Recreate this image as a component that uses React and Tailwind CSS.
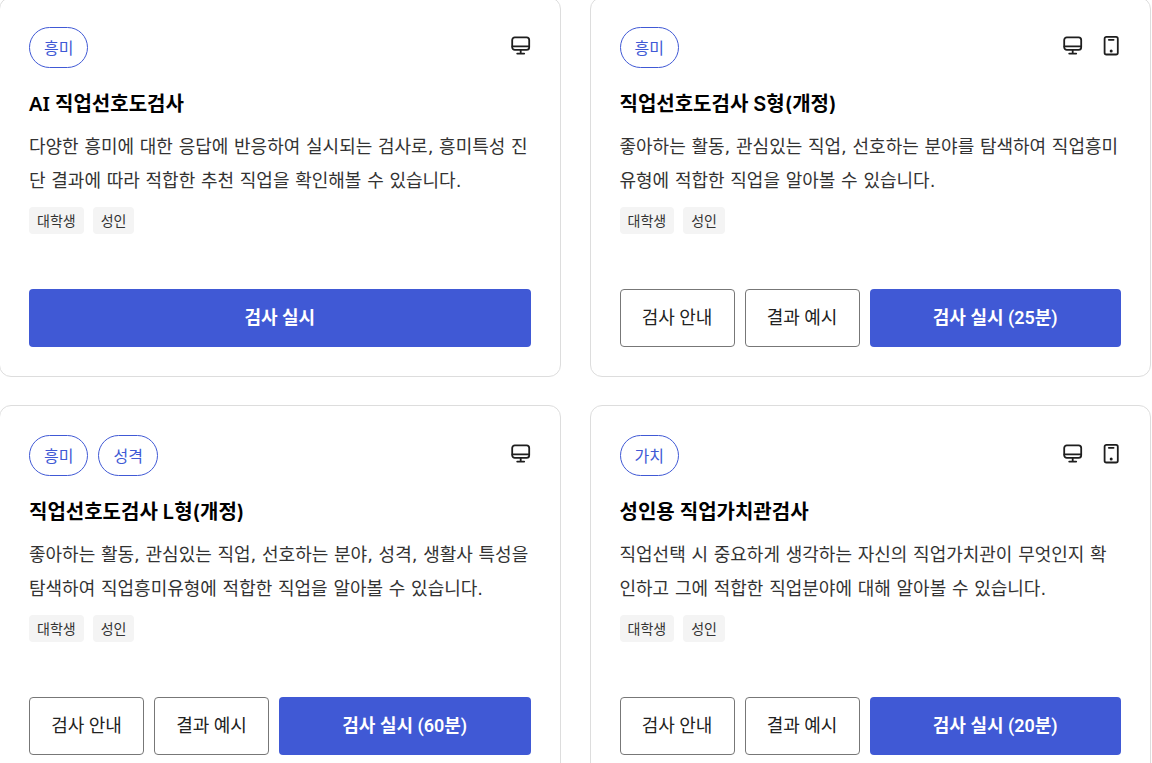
import React from "react";
import clsx from "clsx";

const tests = [
  {
    id: "ai",
    categories: ["흥미"],
    mobile: false,
    title: "AI 직업선호도검사",
    titleFont: "font-['Noto_Sans','Noto_Sans_CJK_KR',sans-serif]",
    description:
      "다양한 흥미에 대한 응답에 반응하여 실시되는 검사로, 흥미특성 진단 결과에 따라 적합한 추천 직업을 확인해볼 수 있습니다.",
    targets: ["대학생", "성인"],
    guide: false,
    action: "검사 실시",
  },
  {
    id: "preference-s",
    categories: ["흥미"],
    mobile: true,
    title: "직업선호도검사 S형(개정)",
    description:
      "좋아하는 활동, 관심있는 직업, 선호하는 분야를 탐색하여 직업흥미유형에 적합한 직업을 알아볼 수 있습니다.",
    targets: ["대학생", "성인"],
    guide: true,
    action: "검사 실시 (25분)",
  },
  {
    id: "preference-l",
    categories: ["흥미", "성격"],
    mobile: false,
    title: "직업선호도검사 L형(개정)",
    description:
      "좋아하는 활동, 관심있는 직업, 선호하는 분야, 성격, 생활사 특성을 탐색하여 직업흥미유형에 적합한 직업을 알아볼 수 있습니다.",
    targets: ["대학생", "성인"],
    guide: true,
    action: "검사 실시 (60분)",
  },
  {
    id: "values",
    categories: ["가치"],
    mobile: true,
    title: "성인용 직업가치관검사",
    description:
      "직업선택 시 중요하게 생각하는 자신의 직업가치관이 무엇인지 확인하고 그에 적합한 직업분야에 대해 알아볼 수 있습니다.",
    targets: ["대학생", "성인"],
    guide: true,
    action: "검사 실시 (20분)",
  },
];

const MonitorIcon = () => (
  <svg
    className="size-5 text-[#1e1e1e]"
    viewBox="0 0 20 20"
    fill="none"
    stroke="currentColor"
    strokeWidth="1.8"
    strokeLinecap="round"
    role="img"
    aria-label="PC"
  >
    <rect x="1.2" y="1.4" width="17" height="12.4" rx="2.6" />
    <path d="M1.4 10.4h16.6M9.7 14v3.4M6.2 17.6h7" />
  </svg>
);

const MobileIcon = () => (
  <svg
    className="size-5 text-[#1e1e1e]"
    viewBox="0 0 20 20"
    fill="none"
    stroke="currentColor"
    strokeWidth="1.8"
    strokeLinecap="round"
    role="img"
    aria-label="모바일"
  >
    <rect x="3.6" y="0.9" width="13.2" height="17.6" rx="1.8" />
    <path d="M7.8 3.8h4.8" />
    <circle cx="10.2" cy="15" r="1.5" fill="currentColor" stroke="none" />
  </svg>
);

const TestCard = ({ test }) => {
  return (
    <article className="flex flex-col rounded-xl border border-[#dddddd] bg-white p-[29px]">
      <div className="flex items-start justify-between">
        <ul className="flex gap-[10px]">
          {test.categories.map((category) => (
            <li
              key={category}
              className="flex h-[41px] items-center rounded-full border border-[#4059d5] px-[14px] text-base text-[#4059d5]"
            >
              {category}
            </li>
          ))}
        </ul>
        <div className="mt-[9px] flex gap-[18px]">
          <MonitorIcon />
          {test.mobile && <MobileIcon />}
        </div>
      </div>

      <h3 className={clsx("mt-[21px] text-xl leading-[30px] font-semibold text-black", test.titleFont)}>
        {test.title}
      </h3>
      <p className="mt-[11px] font-['DejaVu_Sans','Noto_Sans_CJK_KR',sans-serif] text-lg leading-[34px] text-[#333333]">
        {test.description}
      </p>

      <ul className="mt-[9px] flex gap-[9px]">
        {test.targets.map((target) => (
          <li
            key={target}
            className="flex h-[27px] items-center rounded bg-[#f4f4f4] px-2 text-sm text-[#333333]"
          >
            {target}
          </li>
        ))}
      </ul>

      <div className="mt-[55px] flex gap-[10px] font-['Roboto','Noto_Sans_CJK_KR',sans-serif] text-lg">
        {test.guide && (
          <>
            <button
              type="button"
              className="h-[58px] w-[115px] shrink-0 rounded border border-[#777777] bg-white text-[#222222]"
            >
              검사 안내
            </button>
            <button
              type="button"
              className="h-[58px] w-[115px] shrink-0 rounded border border-[#777777] bg-white text-[#222222]"
            >
              결과 예시
            </button>
          </>
        )}
        <button type="button" className="h-[58px] flex-1 rounded bg-[#4059d5] font-semibold text-white">
          {test.action}
        </button>
      </div>
    </article>
  );
};

const App = () => {
  return (
    <main className="h-screen overflow-hidden bg-white font-['Inter','Noto_Sans_CJK_KR',sans-serif]">
      <div className="-mt-[3px] -ml-px grid grid-cols-2 gap-x-[29px] gap-y-[28px] pr-px">
        {tests.map((test) => (
          <TestCard key={test.id} test={test} />
        ))}
      </div>
    </main>
  );
};

export default App;
